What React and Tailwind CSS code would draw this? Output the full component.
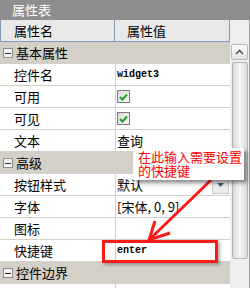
import React from "react";

const cjk = { fontFamily: '"Noto Sans CJK SC", "Noto Sans", sans-serif' };
const mono = { fontFamily: '"Liberation Mono", "Noto Sans CJK SC", monospace' };

const MinusBox = () => (
  <span className="w-[10px] h-[10px] border border-[#8c8c8c] bg-[#f4f4f4] flex items-center justify-center shrink-0">
    <span className="w-[6px] h-[1px] bg-[#333]" />
  </span>
);

const Check = () => (
  <span className="w-[13px] h-[13px] border border-[#7a7a7a] bg-gradient-to-br from-[#dcdcdc] to-[#f8f8f8] flex items-center justify-center">
    <svg width="9" height="8" viewBox="0 0 9 8">
      <path d="M1 4 L3.5 6.5 L8 1.5" fill="none" stroke="#21a321" strokeWidth="2" />
    </svg>
  </span>
);

const Group = ({ label }) => (
  <div className="h-[22px] shrink-0 bg-[#d4d0c8] flex items-center pl-[3px] gap-[3px] text-[13px] text-black">
    <MinusBox />
    <span>{label}</span>
  </div>
);

const Row = ({ label, children, extra }) => (
  <div className="h-[22px] shrink-0 flex border-b border-[#d4d0c8] text-[13px] text-black bg-white">
    <div className="w-[116px] border-r border-[#d4d0c8] pl-[14px] flex items-center">{label}</div>
    <div className="flex-1 flex items-center pl-[1px] relative">
      {children}
      {extra}
    </div>
  </div>
);

export default function App() {
  return (
    <div className="w-[250px] h-[288px] overflow-hidden relative bg-white flex flex-col" style={cjk}>
      <div className="h-[20px] shrink-0 bg-[#8e8e8e] text-white text-[13px] flex items-center pl-[12px]">属性表</div>
      <div className="flex flex-1 min-h-0">
        <div className="w-[230px] flex flex-col">
          <div className="h-[22px] shrink-0 flex bg-[#e8e8e8] border-l border-r border-b border-[#7f9db9] text-[13px] text-black">
            <div className="w-[114px] border-r border-[#7f9db9] pl-[13px] flex items-center">属性名</div>
            <div className="flex-1 pl-[12px] flex items-center">属性值</div>
          </div>
          <Group label="基本属性" />
          <Row label="控件名">
            <span className="text-[10px] font-bold" style={mono}>widget3</span>
          </Row>
          <Row label="可用"><Check /></Row>
          <Row label="可见"><Check /></Row>
          <Row label="文本"><span>查询</span></Row>
          <Group label="高级" />
          <Row
            label="按钮样式"
            extra={
              <span className="absolute right-[1px] top-[1px] w-[17px] h-[19px] border border-[#c8c8c8] bg-[#ececec] flex items-center justify-center">
                <svg width="7" height="4" viewBox="0 0 7 4"><path d="M0 0 H7 L3.5 4 Z" fill="#4d6185" /></svg>
              </span>
            }
          >
            <span>默认</span>
          </Row>
          <Row label="字体"><span>[宋体, 0, 9]</span></Row>
          <Row label="图标" />
          <Row label="快捷键">
            <span className="text-[10px] font-bold" style={mono}>enter</span>
          </Row>
          <Group label="控件边界" />
          <Row label="" />
        </div>
        <div className="w-[20px] bg-[#efefef] border-r border-[#a0a0a0] flex flex-col items-center pt-[24px]">
          <div className="w-[17px] h-[16px] shrink-0 rounded-[2px] border border-[#b8b8b8] bg-gradient-to-b from-[#fafafa] to-[#e4e4e4] flex items-center justify-center">
            <svg width="9" height="6" viewBox="0 0 9 6"><path d="M1 5 L4.5 1.5 L8 5" fill="none" stroke="#555" strokeWidth="1.6" /></svg>
          </div>
          <div className="mt-[2px] w-[16px] h-[197px] shrink-0 rounded-[2px] border border-[#b4b4b4] bg-gradient-to-r from-[#d8d8d8] via-[#f6f6f6] to-[#dadada]" />
        </div>
      </div>

      <div className="absolute left-[102px] top-[240px] w-[116px] h-[23px] border-[3px] border-[#ff1a1a] shadow-[2px_2px_3px_rgba(0,0,0,0.3)]" />

      <svg className="absolute inset-0 pointer-events-none" width="250" height="288">
        <line x1="211" y1="180" x2="151" y2="238" stroke="#ff1a1a" strokeWidth="3" />
        <polyline points="155,221 149,240 170,233" fill="none" stroke="#ff1a1a" strokeWidth="3" strokeLinejoin="miter" />
      </svg>

      <div className="absolute left-[133px] top-[148px] w-[111px] h-[32px] bg-white shadow-[3px_3px_4px_rgba(0,0,0,0.45)] pl-[5px] pt-[2px] text-[13px] leading-[14px] text-[#ff0000]">
        <div>在此输入需要设置</div>
        <div>的快捷键</div>
      </div>
    </div>
  );
}
